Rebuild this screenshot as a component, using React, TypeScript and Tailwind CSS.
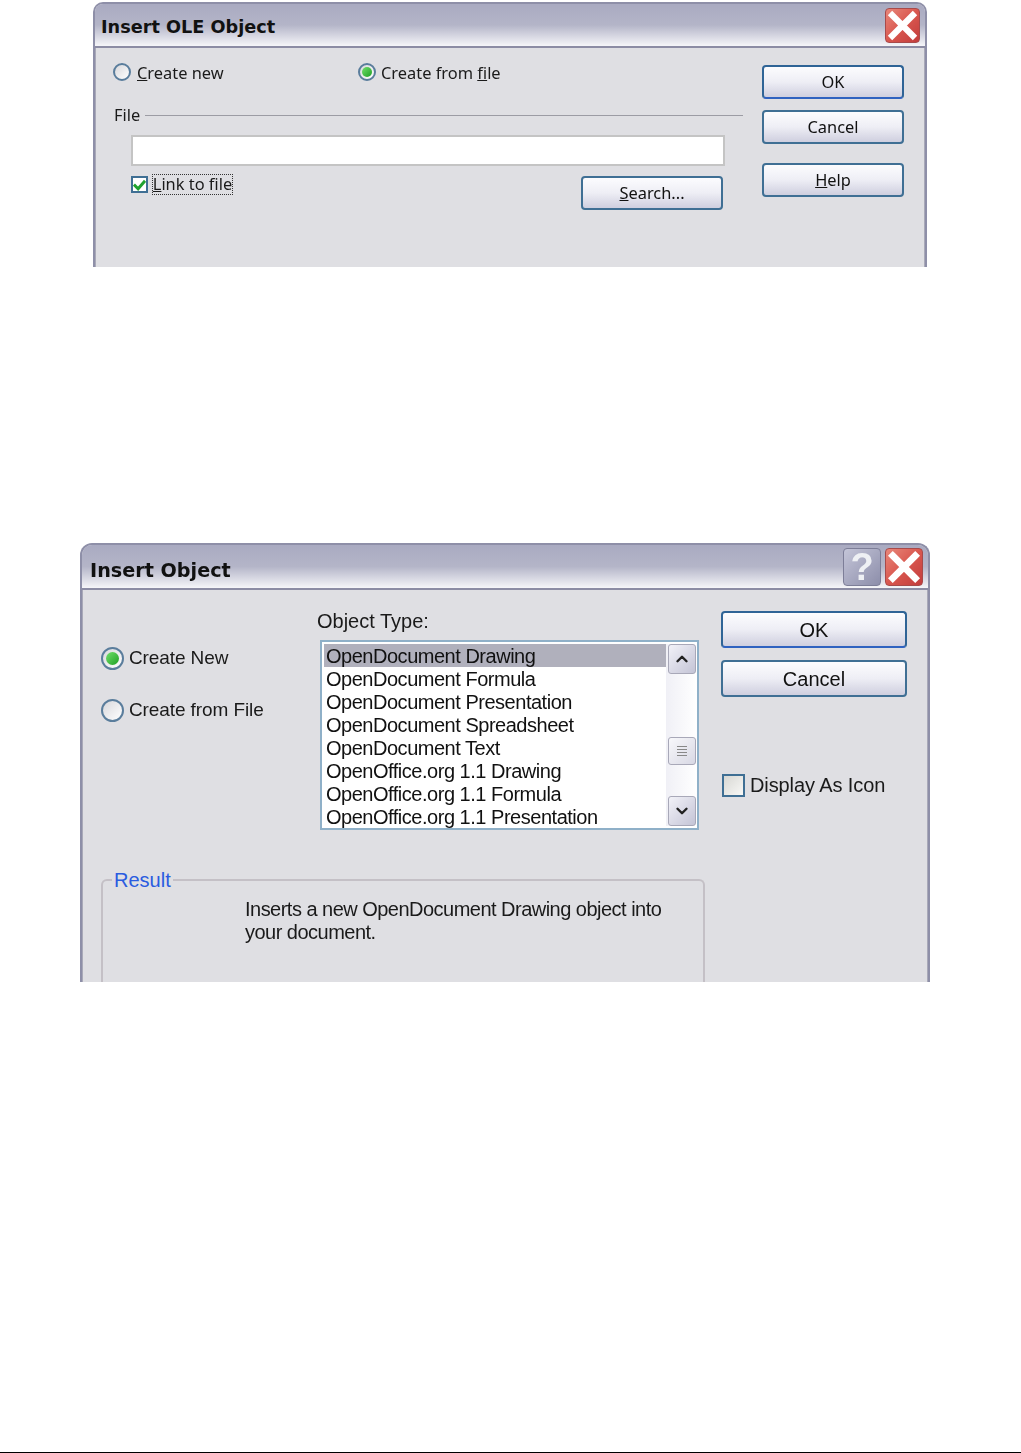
import type { ReactNode } from 'react';
import { ChevronDown, ChevronUp } from 'lucide-react';

const objectTypes = [
  'OpenDocument Drawing',
  'OpenDocument Formula',
  'OpenDocument Presentation',
  'OpenDocument Spreadsheet',
  'OpenDocument Text',
  'OpenOffice.org 1.1 Drawing',
  'OpenOffice.org 1.1 Formula',
  'OpenOffice.org 1.1 Presentation',
];

function CloseButton({ className }: { className: string }) {
  return (
    <div className={`flex items-center justify-center rounded-[4px] border border-[#a84a4a] bg-gradient-to-br from-[#e8867a] via-[#d9574f] to-[#c23c3c] ${className}`}>
      <svg viewBox="0 0 32 32" className="h-full w-full">
        <path d="M6 6 L26 26 M26 6 L6 26" stroke="#ffffff" strokeWidth="6" strokeLinecap="square" />
      </svg>
    </div>
  );
}

function Radio({ checked, size }: { checked?: boolean; size: 'sm' | 'lg' }) {
  return (
    <div
      className={`flex shrink-0 items-center justify-center rounded-full border-2 border-[#5a7d9c] bg-gradient-to-br from-[#d8d8dc] to-[#ffffff] ${
        size === 'lg' ? 'h-[23px] w-[23px]' : 'mb-[2px] h-[18px] w-[18px]'
      }`}
    >
      {checked && (
        <div className={`rounded-full bg-gradient-to-br from-[#6fe06a] to-[#16a022] ${size === 'lg' ? 'h-[13px] w-[13px]' : 'h-[10px] w-[10px]'}`} />
      )}
    </div>
  );
}

function PushButton({ children, className, isDefault }: { children: ReactNode; className: string; isDefault?: boolean }) {
  return (
    <div
      className={`flex items-center justify-center rounded-[4px] border-2 bg-gradient-to-b from-[#fcfcfe] via-[#eeeef5] to-[#cfcfdf] text-[#111] ${
        isDefault ? 'border-[#2f6496] border-b-[#2f62c0]' : 'border-[#3f6f94]'
      } ${className}`}
    >
      {children}
    </div>
  );
}

function TitleBar({ title, className, children }: { title: string; className: string; children: ReactNode }) {
  return (
    <div className={`flex items-center justify-between border-b-2 border-[#8c8ca4] bg-gradient-to-b from-[#a9aac1] via-[#b4b5c8] via-50% to-[#f6f6f9] font-['DejaVu_Sans',sans-serif] font-bold text-[#111] ${className}`}>
      <span>{title}</span>
      <div className="flex items-center gap-[4px]">{children}</div>
    </div>
  );
}

function InsertOleDialog() {
  return (
    <div className="ml-[93px] mt-[2px] flex h-[265px] w-[834px] flex-col rounded-t-[10px] border-2 border-b-0 border-[#8e8fa8] bg-[#dfdfe3] font-['Noto_Sans',sans-serif] text-[16.4px] leading-[24px] text-[#1a1a1a] blur-[0.4px]">
      <TitleBar title="Insert OLE Object" className="h-[44px] rounded-t-[8px] pl-[6px] pr-[5px] text-[17.7px] [&>span]:pt-[4px]">
        <CloseButton className="h-[35px] w-[35px]" />
      </TitleBar>
      <div className="flex flex-1 border-x border-[#a9a9b8]">
        <div className="w-[647px] pl-[18px] pt-[13px]">
          <div className="flex h-[24px] items-center">
            <div className="-ml-px flex w-[245px] items-center gap-[6px]">
              <Radio size="sm" />
              <span><u>C</u>reate new</span>
            </div>
            <div className="flex items-center gap-[5px]">
              <Radio size="sm" checked />
              <span>Create from <u>f</u>ile</span>
            </div>
          </div>
          <div className="mt-[21px] flex h-[18px] items-center gap-[5px]">
            <span>File</span>
            <div className="h-px flex-1 bg-[#9c9ca4]" />
          </div>
          <div className="ml-[17px] mt-[11px] h-[31px] w-[594px] border-2 border-[#c4c4c4] bg-white" />
          <div className="ml-[17px] mt-[8px] flex w-[592px] items-start justify-between">
            <div className="flex items-start gap-[4px]">
              <div className="mt-[2px] flex h-[17px] w-[17px] items-center justify-center border-2 border-[#3f6f94] bg-white">
                <svg viewBox="0 0 14 14" className="h-[14px] w-[14px]">
                  <path d="M1 6.5 L5.5 11 L13 2.5" fill="none" stroke="#1fa22e" strokeWidth="3.2" />
                </svg>
              </div>
              <div className="flex h-[21px] w-[81px] items-center justify-center whitespace-nowrap border border-dotted border-[#333] pb-[2px]">
                <span><u>L</u>ink to file</span>
              </div>
            </div>
            <PushButton className="mt-[2px] h-[34px] w-[142px]"><span><u>S</u>earch...</span></PushButton>
          </div>
        </div>
        <div className="ml-[19px] flex w-[142px] flex-col pt-[17px]">
          <PushButton isDefault className="h-[34px]">OK</PushButton>
          <PushButton className="mt-[11px] h-[34px]">Cancel</PushButton>
          <PushButton className="mt-[19px] h-[34px]"><span><u>H</u>elp</span></PushButton>
        </div>
      </div>
    </div>
  );
}

function ObjectList() {
  return (
    <div className="ml-[3px] mt-[7px] flex h-[190px] w-[379px] border-2 border-[#8fb0c8] bg-white py-[2px] pl-[2px]">
      <div className="flex-1 text-[20px] leading-[23px] tracking-[-0.48px] text-[#111]">
        {objectTypes.map((name, index) => (
          <div key={name} className={`h-[23px] pl-[2px] pt-px ${index === 0 ? 'bg-[#b0b0bc]' : ''}`}>{name}</div>
        ))}
      </div>
      <div className="flex w-[31px] flex-col bg-gradient-to-r from-[#f0f0f6] to-[#ffffff] pl-[2px] pr-px">
        <div className="flex h-[30px] items-center justify-center rounded-[3px] border border-[#a8a8b8] bg-gradient-to-br from-[#f2f2f8] to-[#c4c4d6]">
          <ChevronUp size={18} strokeWidth={3.2} className="text-[#222]" />
        </div>
        <div className="mt-[63px] flex h-[28px] flex-col items-center justify-center gap-[2px] rounded-[3px] border border-[#a8a8b8] bg-gradient-to-br from-[#f8f8fb] to-[#d8d8e4]">
          <div className="h-px w-[10px] bg-[#888]" />
          <div className="h-px w-[10px] bg-[#888]" />
          <div className="h-px w-[10px] bg-[#888]" />
          <div className="h-px w-[10px] bg-[#888]" />
        </div>
        <div className="mt-auto flex h-[30px] items-center justify-center rounded-[3px] border border-[#a8a8b8] bg-gradient-to-br from-[#f2f2f8] to-[#c4c4d6]">
          <ChevronDown size={18} strokeWidth={3.2} className="text-[#222]" />
        </div>
      </div>
    </div>
  );
}

function InsertObjectDialog() {
  return (
    <div className="ml-[80px] mt-[276px] flex h-[439px] w-[850px] flex-col rounded-t-[12px] border-2 border-b-0 border-[#8e8fa8] bg-[#dfdfe3] font-['Liberation_Sans',sans-serif] text-[20px] leading-[24px] text-[#1a1a1a] blur-[0.4px]">
      <TitleBar title="Insert Object" className="h-[48px] rounded-t-[10px] pl-[8px] pr-[5px] text-[19.2px] [&>span]:pt-[9px]">
        <div className="flex h-[38px] w-[38px] items-center justify-center rounded-[4px] border border-[#7d7e98] bg-gradient-to-br from-[#c4c5d8] to-[#8d8eaa] font-['Liberation_Sans',sans-serif] text-[38px] font-bold leading-none text-[#eef0f4]">?</div>
        <CloseButton className="h-[38px] w-[38px]" />
      </TitleBar>
      <div className="flex flex-1 border-x border-[#a9a9b8]">
        <div className="w-[638px] pl-[18px]">
          <div className="flex">
            <div className="flex w-[216px] flex-col gap-[28px] pt-[56px] text-[19px] tracking-[-0.1px]">
              <div className="flex h-[24px] items-center gap-[5px]">
                <Radio size="lg" checked />
                <span>Create New</span>
              </div>
              <div className="flex h-[24px] items-center gap-[5px]">
                <Radio size="lg" />
                <span>Create from File</span>
              </div>
            </div>
            <div className="pt-[19px]">
              <div>Object Type:</div>
              <ObjectList />
            </div>
          </div>
          <div className="relative mt-[49px] h-[103px] w-[604px] rounded-t-[6px] border-2 border-b-0 border-[#c4c0c6]">
            <span className="absolute left-[9px] top-[-13px] bg-[#dfdfe3] px-[2px] text-[#2a5ce0]">Result</span>
            <div className="pl-[142px] pt-[17px] leading-[23px] tracking-[-0.52px]">
              Inserts a new OpenDocument Drawing object into<br />your document.
            </div>
          </div>
        </div>
        <div className="flex w-[186px] flex-col pt-[21px]">
          <PushButton isDefault className="h-[37px]">OK</PushButton>
          <PushButton className="mt-[12px] h-[37px]">Cancel</PushButton>
          <div className="ml-px mt-[76px] flex items-center gap-[5px] tracking-[-0.1px]">
            <div className="h-[23px] w-[23px] border-2 border-[#3f6f94] bg-gradient-to-br from-[#d8d8d4] to-[#f8f8f6]" />
            <span>Display As Icon</span>
          </div>
        </div>
      </div>
    </div>
  );
}

export default function App() {
  return (
    <div className="flex h-[1453px] w-[1021px] flex-col bg-white">
      <InsertOleDialog />
      <InsertObjectDialog />
      <div className="mt-auto h-px bg-black" />
    </div>
  );
}
